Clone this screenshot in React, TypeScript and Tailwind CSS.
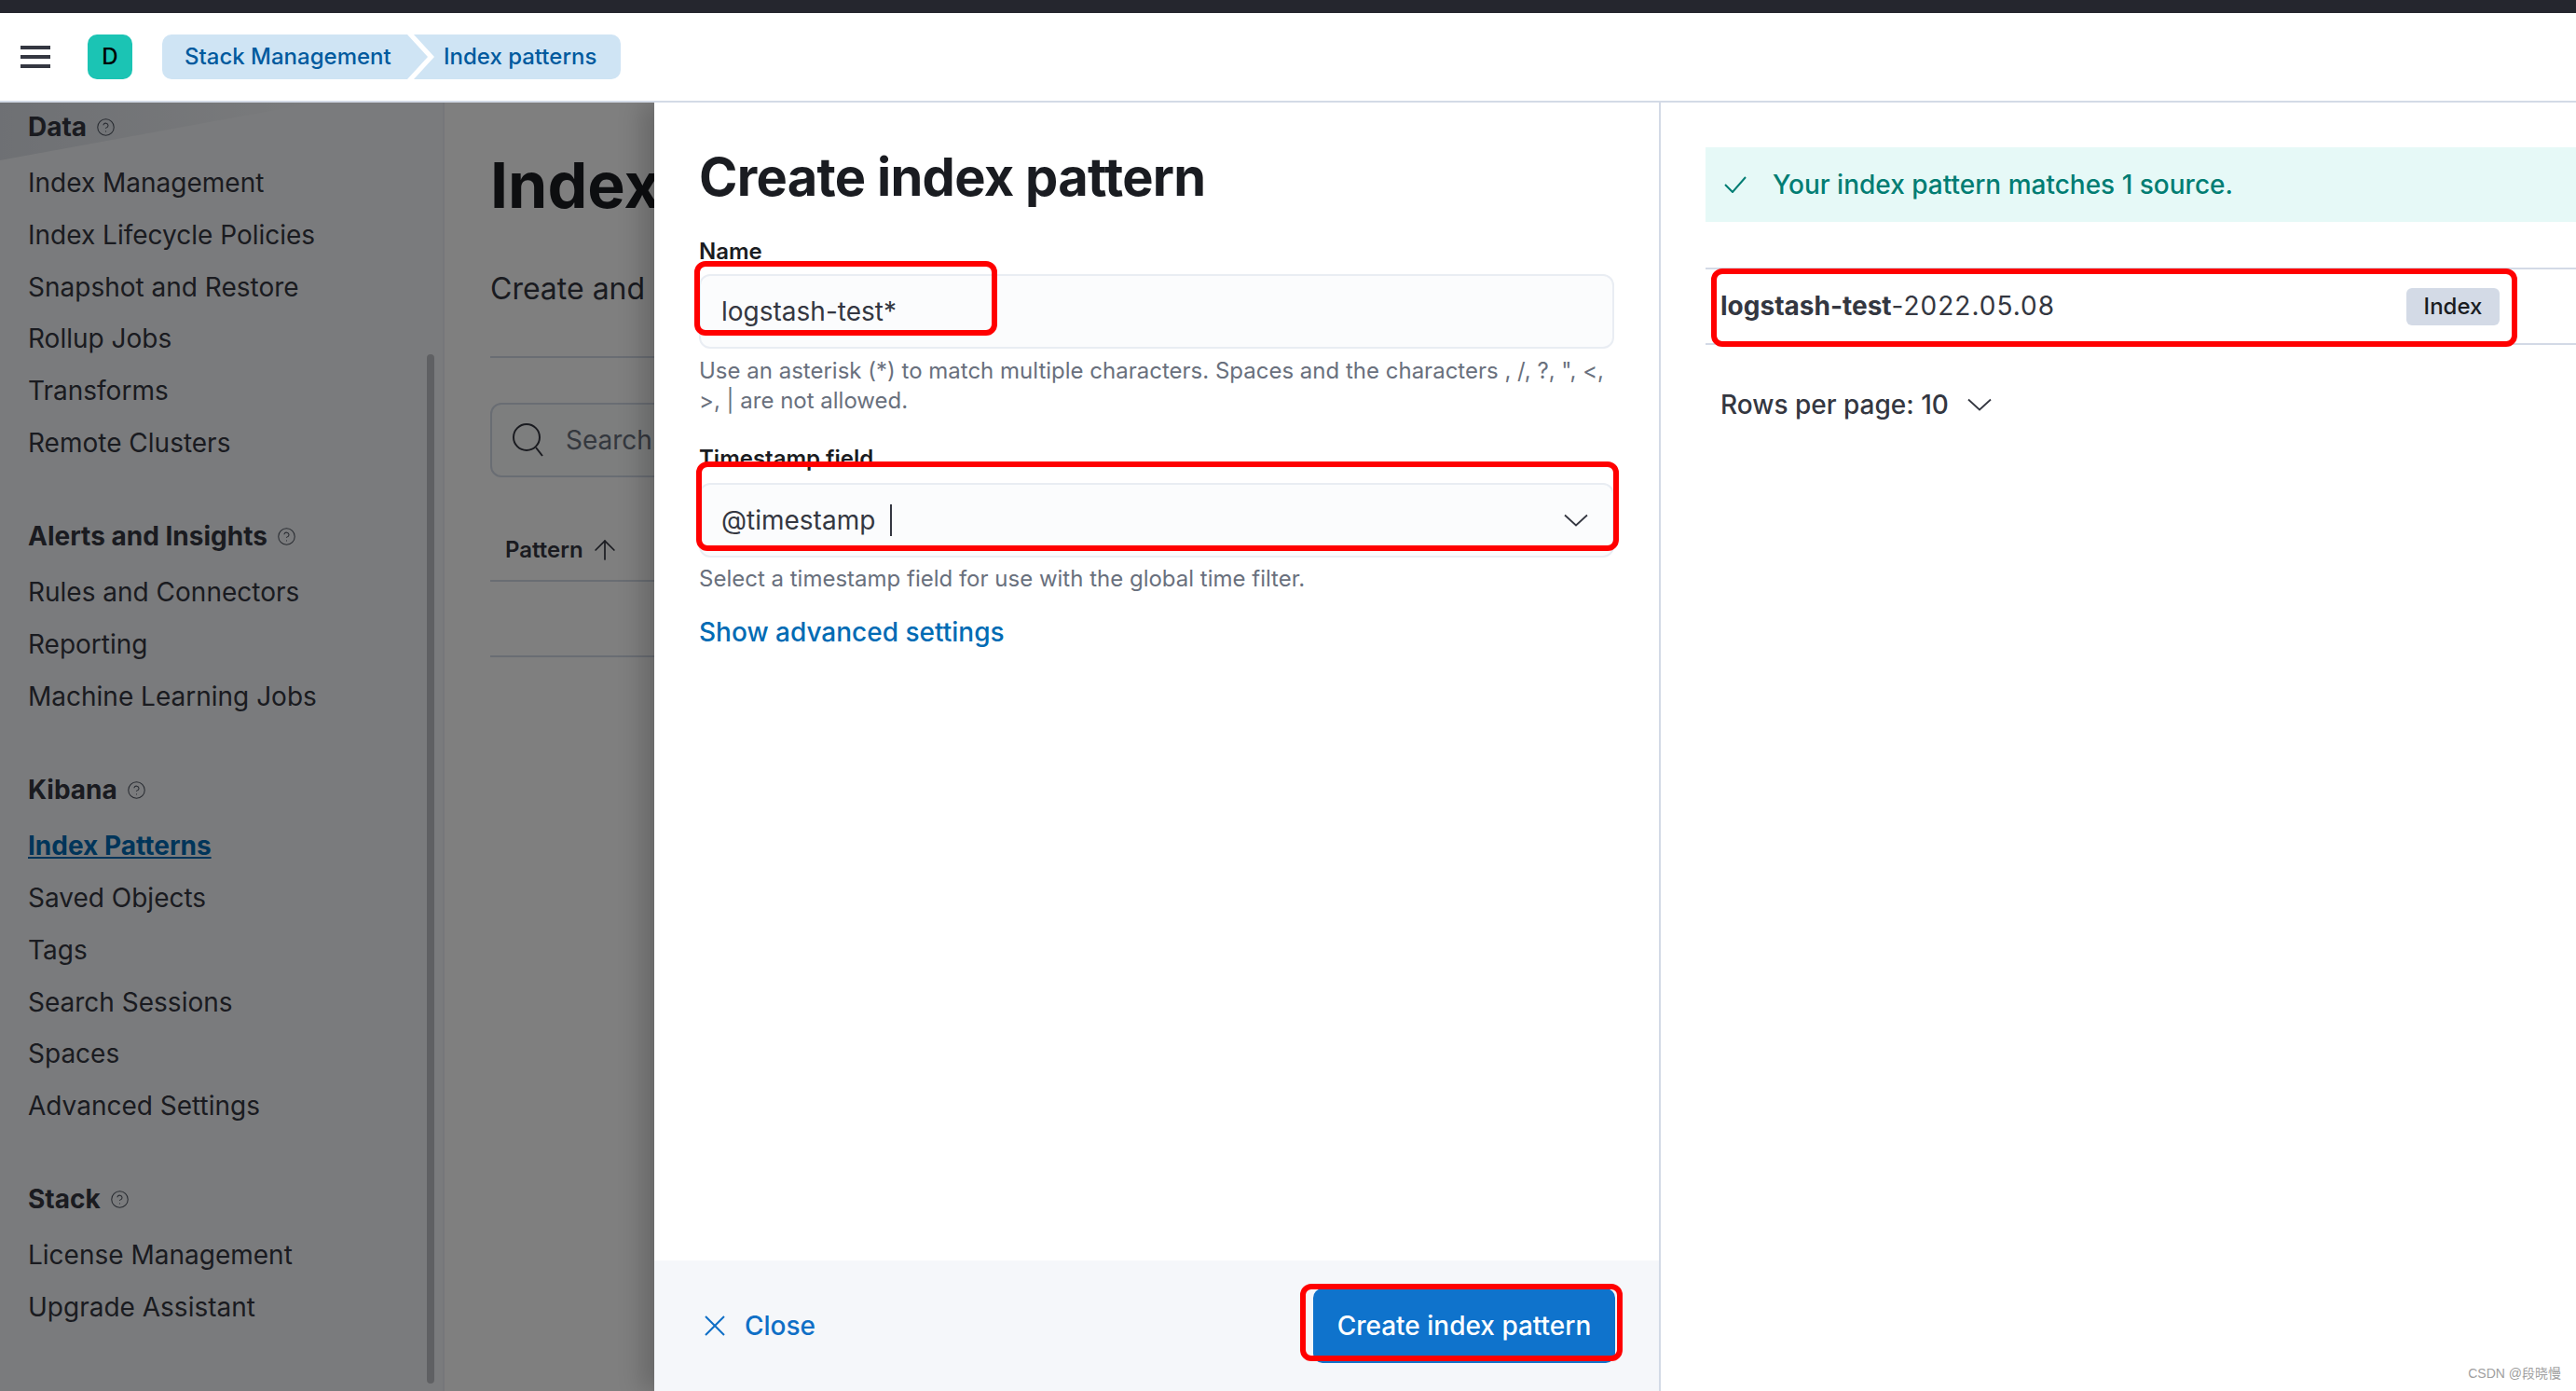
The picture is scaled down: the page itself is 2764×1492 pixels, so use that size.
import { ArrowUp, CircleHelp } from "lucide-react";

const groups = [
  {
    title: "Data",
    items: [
      "Index Management",
      "Index Lifecycle Policies",
      "Snapshot and Restore",
      "Rollup Jobs",
      "Transforms",
      "Remote Clusters",
    ],
  },
  {
    title: "Alerts and Insights",
    items: ["Rules and Connectors", "Reporting", "Machine Learning Jobs"],
  },
  {
    title: "Kibana",
    items: [
      "Index Patterns",
      "Saved Objects",
      "Tags",
      "Search Sessions",
      "Spaces",
      "Advanced Settings",
    ],
  },
  { title: "Stack", items: ["License Management", "Upgrade Assistant"] },
];

function Chevron({ className }: { className?: string }) {
  return (
    <svg width="26" height="14" viewBox="0 0 26 14" fill="none" className={className}>
      <path d="M1 1.5 13 12.5 25 1.5" stroke="currentColor" strokeWidth="1.8" />
    </svg>
  );
}

function Sidebar() {
  return (
    <aside className="relative w-[477px] shrink-0 bg-[#f5f7fa] pt-[6px] pl-[30px] border-r-2 border-[#eceff4]">
      {/* shaded wedge at the top of the nav */}
      <div className="absolute left-0 top-0 w-[340px] h-[62px] bg-gradient-to-r from-[#dde1e8] to-[#f5f7fa] [clip-path:polygon(0_0,100%_0,0_100%)]" />
      {/* scrollbar */}
      <div className="absolute left-[458px] top-[270px] bottom-[8px] w-[8px] rounded-full bg-[#bfc1c6]" />
      <div className="relative">
        {groups.map((group) => (
          <div key={group.title} className="mb-[52.5px]">
            <div className="flex items-center gap-[10px] h-[40px] mb-[12px]">
              <span className="text-[28px] font-bold text-[#343741]">{group.title}</span>
              <CircleHelp size={21} strokeWidth={1.2} className="text-[#4f5561]" />
            </div>
            {group.items.map((item) =>
              item === "Index Patterns" ? (
                <div key={item} className="h-[55.8px] leading-[56px] text-[28px] font-bold text-[#006bb4] underline">
                  {item}
                </div>
              ) : (
                <div key={item} className="h-[55.8px] leading-[56px] text-[28px] text-[#343741]">
                  {item}
                </div>
              ),
            )}
          </div>
        ))}
      </div>
    </aside>
  );
}

function MainContent() {
  return (
    <main className="flex-1 bg-white pl-[49px] pt-[44px] overflow-hidden whitespace-nowrap">
      <h1 className="text-[68px] leading-[88px] font-bold text-[#1a1c21]">Index</h1>
      <p className="mt-[46px] text-[32px] leading-[44px] text-[#343741]">Create and</p>
      <div className="mt-[50px] h-[2px] bg-[#d3dae6]" />
      <div className="mt-[48px] h-[80px] border-2 border-[#d3dae6] rounded-[12px] bg-[#fbfcfd] flex items-center pl-[22px] gap-[23px] text-[28px] text-[#69707d]">
        <svg width="34" height="36" viewBox="0 0 34 36" fill="none" className="text-[#343741]">
          <circle cx="15" cy="15" r="14" stroke="currentColor" strokeWidth="2" />
          <path d="M25 26 32 35" stroke="currentColor" strokeWidth="2" />
        </svg>
        Search...
      </div>
      <div className="mt-[56px] pl-[16px] flex items-center gap-[6px] h-[44px] text-[24px] font-semibold text-[#343741]">
        Pattern
        <ArrowUp size={34} strokeWidth={1.2} />
      </div>
      <div className="mt-[10px] h-[2px] bg-[#d3dae6]" />
      <div className="mt-[79px] h-[2px] bg-[#d3dae6]" />
    </main>
  );
}

function Flyout() {
  return (
    <section className="absolute left-[702px] right-0 top-0 bottom-0 bg-white flex shadow-[-14px_0_24px_rgba(0,0,0,0.18)]">
      <div className="w-[1080px] shrink-0 flex flex-col border-r-2 border-[#d3dae6]">
        <div className="flex-1 pl-[48px] pr-[48px] pt-[42px]">
          <h2 className="text-[56px] leading-[76px] font-bold tracking-[-0.7px] text-[#1a1c21]">
            Create index pattern
          </h2>

          <label className="block mt-[30px] h-[24px] leading-[24px] text-[24px] font-semibold text-[#1a1c21]">
            Name
          </label>
          <div className="mt-[12px] h-[80px] border-2 border-[#e9edf3] rounded-[12px] bg-[#fbfcfd] flex items-center pl-[22px] text-[28px] text-[#343741]">
            logstash-test*
          </div>
          <p className="mt-[8px] text-[24px] leading-[32px] text-[#69707d]">
            Use an asterisk (*) to match multiple characters. Spaces and the characters , /, ?, ", &lt;, &gt;, | are not
            allowed.
          </p>

          <label className="block mt-[34px] h-[24px] leading-[24px] text-[24px] font-semibold text-[#1a1c21]">
            Timestamp field
          </label>
          <div className="mt-[14px] h-[80px] border-2 border-[#e9edf3] rounded-[12px] bg-[#fbfcfd] flex items-center pl-[22px] pr-[26px] text-[28px] text-[#343741]">
            @timestamp
            <span className="ml-[16px] w-[2px] h-[34px] bg-[#343741]" />
            <Chevron className="ml-auto text-[#343741]" />
          </div>
          <p className="mt-[7px] text-[24px] leading-[32px] text-[#69707d]">
            Select a timestamp field for use with the global time filter.
          </p>
          <a className="block mt-[21px] text-[28px] leading-[40px] font-medium text-[#006bb4]">Show advanced settings</a>
        </div>

        <footer className="h-[140px] bg-[#f5f7fa] flex items-center justify-between pl-[54px] pr-[47px]">
          <div className="flex items-center gap-[21px] text-[28px] font-medium text-[#0f6fc6]">
            <svg width="22" height="22" viewBox="0 0 22 22" fill="none">
              <path d="M1 1 21 21M21 1 1 21" stroke="currentColor" strokeWidth="2" />
            </svg>
            Close
          </div>
          <button className="w-[324px] h-[80px] rounded-[10px] bg-[#0f73cc] text-white text-[28px] font-medium">
            Create index pattern
          </button>
        </footer>
      </div>

      <div className="flex-1 pt-[48px] pl-[48px]">
        <div className="h-[80px] bg-[#e6f9f7] flex items-center pl-[20px] gap-[28px] text-[28px] font-medium text-[#017d73]">
          <svg width="24" height="18" viewBox="0 0 24 18" fill="none">
            <path d="M1 9 9 17 23 1" stroke="currentColor" strokeWidth="2" />
          </svg>
          Your index pattern matches 1 source.
        </div>
        <div className="mt-[49px] h-[83px] border-y-2 border-[#d3dae6] flex items-center pl-[16px] pr-[82px] text-[28px] text-[#343741]">
          <span className="relative -top-[1px] font-bold">logstash-test</span>
          <span className="relative -top-[1px] tracking-[1px]">-2022.05.08</span>
          <span className="ml-auto w-[100px] h-[40px] rounded-[6px] bg-[#d3dae6] flex items-center justify-center text-[24px] font-medium text-[#1a1c21]">
            Index
          </span>
        </div>
        <div className="mt-[43px] pl-[16px] flex items-center gap-[20px] text-[28px] font-medium text-[#343741]">
          Rows per page: 10
          <Chevron />
        </div>
      </div>

      {/* red annotation boxes */}
      <div className="absolute left-[43px] top-[170px] w-[325px] h-[80px] border-[6px] border-[#ff0000] rounded-[12px]" />
      <div className="absolute left-[45px] top-[385px] w-[990px] h-[96px] border-[6px] border-[#ff0000] rounded-[12px]" />
      <div className="absolute left-[1134px] top-[178px] w-[865px] h-[84px] border-[6px] border-[#ff0000] rounded-[12px]" />
      <div className="absolute left-[693px] top-[1267px] w-[346px] h-[83px] border-[6px] border-[#ff0000] rounded-[12px]" />
    </section>
  );
}

export default function App() {
  return (
    <div className="h-screen flex flex-col overflow-hidden bg-white [font-family:Inter,sans-serif]">
      <div className="h-[14px] bg-[#25262e]" />
      <header className="h-[96px] shrink-0 bg-white border-b-2 border-[#d3dae6] flex items-center pl-[22px]">
        <div className="w-[32px] flex flex-col gap-[6px]">
          <span className="h-[4px] bg-[#343741]" />
          <span className="h-[4px] bg-[#343741]" />
          <span className="h-[4px] bg-[#343741]" />
        </div>
        <div className="ml-[40px] w-[48px] h-[48px] rounded-[10px] bg-[#1bc4b4] flex items-center justify-center text-[24px] font-medium text-black">
          D
        </div>
        <nav className="ml-[32px] flex text-[24px] font-medium text-[#005a9e]">
          <div className="w-[285px] h-[48px] pl-[24px] flex items-center bg-[#cfe4f4] rounded-l-[10px] [clip-path:polygon(0_0,263px_0,285px_50%,263px_100%,0_100%)]">
            Stack Management
          </div>
          <div className="-ml-[15px] w-[222px] h-[48px] pl-[32px] flex items-center bg-[#cfe4f4] rounded-r-[10px] [clip-path:polygon(0_0,100%_0,100%_100%,0_100%,22px_50%)]">
            Index patterns
          </div>
        </nav>
      </header>

      <div className="relative flex-1 flex overflow-hidden">
        <Sidebar />
        <MainContent />
        {/* overlay mask */}
        <div className="absolute inset-0 bg-black/50" />
        <Flyout />
      </div>

      <span className="absolute right-[16px] bottom-[8px] text-[14px] text-[#a0a0a0] [font-family:'Liberation_Sans','Noto_Sans_CJK_SC',sans-serif]">
        CSDN @段晓慢
      </span>
    </div>
  );
}
